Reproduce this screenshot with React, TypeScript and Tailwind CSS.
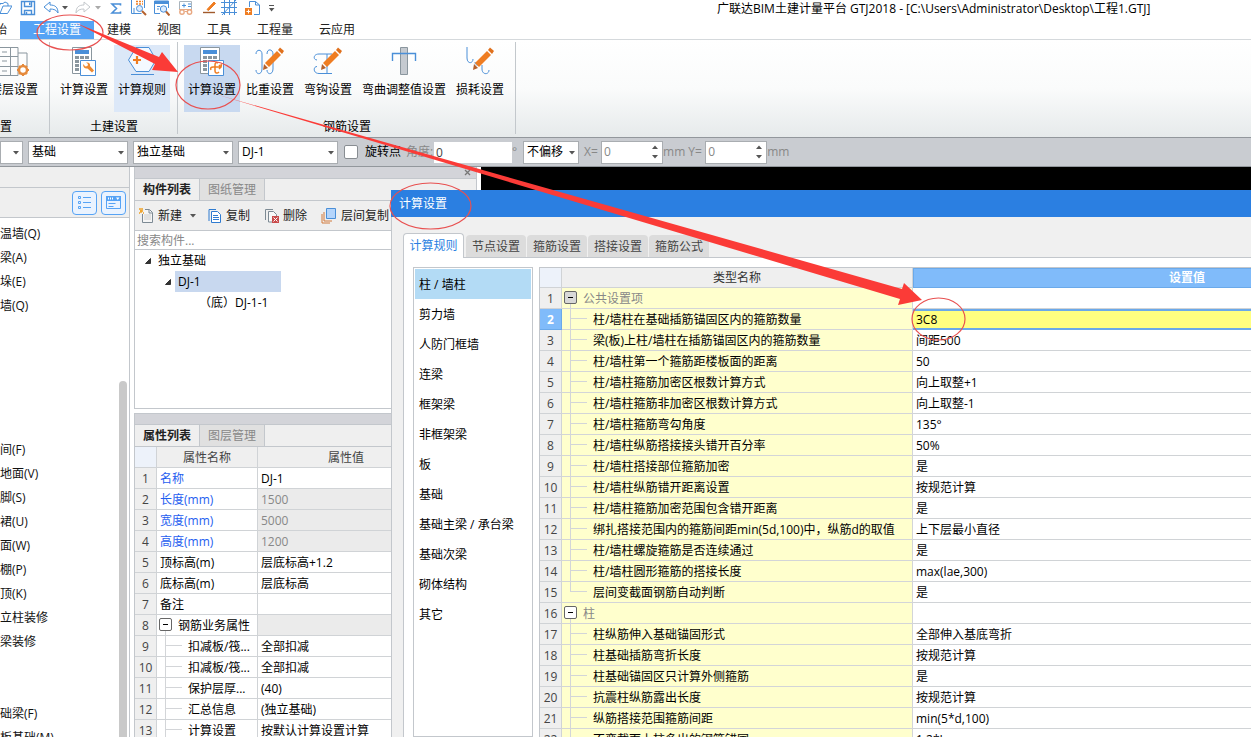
import type { ReactNode } from 'react';
import clsx from 'clsx';

const FONT = "font-['Open_Sans','Noto_Sans_CJK_SC',sans-serif]";

const menuTabs = ['工程设置', '建模', '视图', '工具', '工程量', '云应用'];

const moduleRows = [
  '温墙(Q)', '梁(A)', '垛(E)', '墙(Q)', '', '', '', '', '', '间(F)', '地面(V)', '脚(S)', '裙(U)', '面(W)', '棚(P)',
  '顶(K)', '立柱装修', '梁装修', '', '', '础梁(F)', '板基础(M)',
];

const categories = [
  '柱 / 墙柱', '剪力墙', '人防门框墙', '连梁', '框架梁', '非框架梁', '板', '基础', '基础主梁 / 承台梁', '基础次梁',
  '砌体结构', '其它',
];

interface Row {
  name: string;
  value: string;
  kind?: 'group' | 'child' | 'last';
  link?: boolean;
  locked?: boolean;
}

const properties: Row[] = [
  { name: '名称', value: 'DJ-1', link: true },
  { name: '长度(mm)', value: '1500', link: true, locked: true },
  { name: '宽度(mm)', value: '5000', link: true, locked: true },
  { name: '高度(mm)', value: '1200', link: true, locked: true },
  { name: '顶标高(m)', value: '层底标高+1.2' },
  { name: '底标高(m)', value: '层底标高' },
  { name: '备注', value: '' },
  { name: '钢筋业务属性', value: '', kind: 'group', locked: true },
  { name: '扣减板/筏...', value: '全部扣减', kind: 'child' },
  { name: '扣减板/筏...', value: '全部扣减', kind: 'child' },
  { name: '保护层厚...', value: '(40)', kind: 'child' },
  { name: '汇总信息', value: '(独立基础)', kind: 'child' },
  { name: '计算设置', value: '按默认计算设置计算', kind: 'child' },
];

const settings: Row[] = [
  { name: '公共设置项', value: '', kind: 'group' },
  { name: '柱/墙柱在基础插筋锚固区内的箍筋数量', value: '3C8', kind: 'child' },
  { name: '梁(板)上柱/墙柱在插筋锚固区内的箍筋数量', value: '间距500', kind: 'child' },
  { name: '柱/墙柱第一个箍筋距楼板面的距离', value: '50', kind: 'child' },
  { name: '柱/墙柱箍筋加密区根数计算方式', value: '向上取整+1', kind: 'child' },
  { name: '柱/墙柱箍筋非加密区根数计算方式', value: '向上取整-1', kind: 'child' },
  { name: '柱/墙柱箍筋弯勾角度', value: '135°', kind: 'child' },
  { name: '柱/墙柱纵筋搭接接头错开百分率', value: '50%', kind: 'child' },
  { name: '柱/墙柱搭接部位箍筋加密', value: '是', kind: 'child' },
  { name: '柱/墙柱纵筋错开距离设置', value: '按规范计算', kind: 'child' },
  { name: '柱/墙柱箍筋加密范围包含错开距离', value: '是', kind: 'child' },
  { name: '绑扎搭接范围内的箍筋间距min(5d,100)中，纵筋d的取值', value: '上下层最小直径', kind: 'child' },
  { name: '柱/墙柱螺旋箍筋是否连续通过', value: '是', kind: 'child' },
  { name: '柱/墙柱圆形箍筋的搭接长度', value: 'max(lae,300)', kind: 'child' },
  { name: '层间变截面钢筋自动判断', value: '是', kind: 'last' },
  { name: '柱', value: '', kind: 'group' },
  { name: '柱纵筋伸入基础锚固形式', value: '全部伸入基底弯折', kind: 'child' },
  { name: '柱基础插筋弯折长度', value: '按规范计算', kind: 'child' },
  { name: '柱基础锚固区只计算外侧箍筋', value: '是', kind: 'child' },
  { name: '抗震柱纵筋露出长度', value: '按规范计算', kind: 'child' },
  { name: '纵筋搭接范围箍筋间距', value: 'min(5*d,100)', kind: 'child' },
  { name: '不变截面上柱多出的钢筋锚固', value: '1.2*Lae', kind: 'child' },
];

function Caret({ className = 'text-[#555]' }: { className?: string }) {
  return (
    <svg width="6" height="4" viewBox="0 0 6 4" className={clsx('shrink-0', className)} aria-hidden="true">
      <path d="M0 0h6L3 3.5z" fill="currentColor" />
    </svg>
  );
}

/* ---------- quick access toolbar ---------- */

function QuickIcon({ label, className, children }: { label: string; className: string; children: ReactNode }) {
  return (
    <button type="button" aria-label={label} className={clsx('h-4 w-4 shrink-0', className)}>
      <svg width="16" height="16" viewBox="0 0 16 16" fill="none" stroke="#4a8fd8">
        {children}
      </svg>
    </button>
  );
}

function TitleBar() {
  return (
    <header className="flex h-[19px] shrink-0 items-start overflow-hidden bg-white">
      <div className="flex w-[717px] shrink-0 items-center">
        <QuickIcon label="打开" className="-ml-1">
          <path d="M4 13.500L7 6h9l-4.500 7.500zM4 5V3.500h3l2-1.500 3 1.500V6" />
        </QuickIcon>
        <QuickIcon label="保存" className="ml-2">
          <path d="M1.500 1.500h13v13h-13zM4.500 1.500v5h7v-5M4.500 14.500v-4h7v4M6.500 12v2" strokeWidth="1.400" />
          <path d="M9 2.500h1.500v2.500H9z" fill="#4a8fd8" stroke="none" />
        </QuickIcon>
        <QuickIcon label="撤销" className="ml-[7px]">
          <path d="M1 7l6-5v3c5 0 8 2 8 8-1.500-3-4-4-8-4v3z" />
        </QuickIcon>
        <Caret className="ml-[3px] text-[#555]" />
        <QuickIcon label="恢复" className="ml-[7px]">
          <path d="M15 7L9 2v3C4 5 1 7 1 13c1.500-3 4-4 8-4v3z" stroke="#c4c8cc" />
        </QuickIcon>
        <Caret className="ml-1 text-[#aaa]" />
        <QuickIcon label="汇总计算" className="ml-[7px]">
          <path d="M12.500 5.500V4H4l4.500 4.500L4 13h8.500v-1.500" strokeWidth="1.600" />
        </QuickIcon>
        <QuickIcon label="查看工程量" className="ml-[7px]">
          <path d="M.5 13.500h10M.5 0v13.500M3 8v6M13.500 0v8" />
          <path d="M5 1.500h2m1 0h2m1 0h1M5 4h2m1 0h2m1 0h1" stroke="#ef7d22" strokeWidth="1.500" />
          <circle cx="8.500" cy="8.500" r="3" fill="#dcecff" />
          <path d="M11 11l4 4" stroke="#b5602c" strokeWidth="2" />
        </QuickIcon>
        <QuickIcon label="查找" className="ml-[7px]">
          <path d="M.5 13.500V1h14v7M.5 13.500H6" />
          <path d="M0 1h15v3H0z" fill="#4a8fd8" stroke="none" />
          <path d="M3 6.500h3M3 9h2" />
          <circle cx="9.500" cy="9" r="3.200" fill="#dcecff" />
          <path d="M12 11.500l3.500 4" stroke="#b5602c" strokeWidth="2" />
        </QuickIcon>
        <QuickIcon label="查看计算式" className="ml-2">
          <path d="M1.500 9V1.500h12V9" stroke="#a9b4bd" />
          <path d="M4 5.500h4M6 3.500v4M10 4h3M10 6.500h3" />
          <circle cx="4" cy="12" r="2.200" stroke="#e8a882" strokeWidth="1.400" />
          <circle cx="11.500" cy="12" r="2.200" stroke="#e8a882" strokeWidth="1.400" />
          <path d="M1 9.500h13M7 11.500h2" stroke="#e8a882" />
        </QuickIcon>
        <QuickIcon label="编辑" className="ml-2">
          <path d="M5 9.500L12 2l1.500 1.500-7 7z" fill="#ef7d22" stroke="#ef7d22" />
          <path d="M1 12.500h12" stroke="#a05a2c" strokeWidth="1.400" />
        </QuickIcon>
        <QuickIcon label="轴网" className="ml-[3px]">
          <path d="M3.500 0v15M8.500 0v15M13.500 0v15M0 2.500h16M0 7.500h16M0 12.500h16M1 15L15 0" />
        </QuickIcon>
        <QuickIcon label="新建图纸" className="ml-2">
          <path d="M4.500 7V1.500h6l4 3.500v9.500H9M10.500 1.500V5h4" />
          <path d="M0 8h7v7H0z" fill="#ef7d22" stroke="none" />
          <path d="M3.500 9.500v4M1.500 11.500h4" stroke="#fff" />
        </QuickIcon>
        <svg width="7" height="8" viewBox="0 0 7 8" className="ml-[7px]" fill="#555">
          <path d="M1 1h5v1H1zM1 4h5.500L3.500 7.500z" />
        </svg>
      </div>
      <h1 className="whitespace-nowrap text-xs leading-[18px] text-black">
        广联达BIM土建计量平台 GTJ2018 - [C:\Users\Administrator\Desktop\工程1.GTJ]
      </h1>
    </header>
  );
}

function MenuTabs() {
  return (
    <nav className="flex h-[21px] shrink-0 border-b border-[#d5d9dc] bg-white text-xs leading-[22px]">
      <button type="button" className="flex w-5 justify-end overflow-hidden pr-[13px] text-[#222]">
        始
      </button>
      {menuTabs.map((tab, i) => (
        <button
          key={tab}
          type="button"
          className={clsx('flex whitespace-nowrap px-[13px]', i === 0 ? 'mt-0.5 bg-[#56a3f5] leading-[18px] text-white' : 'text-[#222]')}
        >
          {tab}
        </button>
      ))}
    </nav>
  );
}

/* ---------- ribbon ---------- */

function Pencil() {
  return (
    <g stroke="none">
      <path d="M10 17L22 5l4 4-12 12z" fill="#ef7d22" />
      <path d="M23 4l2-2.500 4 3.500-2 3z" fill="#e0701c" />
      <path d="M9 18l4 4-5 2z" fill="#b5602c" />
    </g>
  );
}

function Calculator() {
  return (
    <>
      <path d="M3.500 1.500h19v26h-19z" fill="#fff" stroke="#8a969e" />
      <path d="M6 4h14v4H6z" fill="#4a8fd8" stroke="none" />
      <path d="M6 10h4v3H6zm5 0h4v3h-4zm5 0h4v3h-4zM6 14h4v3H6zM6 18h4v3H6zM6 22h4v3H6z" fill="#8a969e" stroke="none" />
      <path d="M11.500 14.500h15v15h-15z" fill="#fff" />
    </>
  );
}

const ribbonIcons = {
  floor: (
    <>
      <path d="M0 1.500h19v28H0M0 10.500h19M0 20.500h19M11.500 1.500v28M19 7h9v14" stroke="#8a969e" />
      <path d="M3 6h5m-5 9h5m-5 10h5" stroke="#8a969e" />
      <circle cx="24" cy="24" r="4" stroke="#e58a3c" strokeWidth="2.500" fill="#fff" />
      <path d="M24 18v2m0 8v2m-6-6h2m8 0h2m-10-4l1 1m6 6l1 1m0-8l-1 1m-6 6l-1 1" stroke="#e58a3c" strokeWidth="2" />
    </>
  ),
  calc: (
    <>
      <Calculator />
      <path d="M14 18l2.500 2.500 2-.5.500-2-2-1.500c3-.5 4.500 1 4 3.500l4 4.500-2 2-4.500-4c-2.500.5-4.500-1-4.500-4.500z" fill="#ef8a30" stroke="none" />
    </>
  ),
  rule: (
    <>
      <path d="M1.500 14L9 1.500h13L29 14l-7 11.500H9z" fill="#f4f9ff" />
      <path d="M10 10v8M6 14h8" stroke="#ef7d22" strokeWidth="2.200" />
      <path d="M4 28.500h23" />
    </>
  ),
  rebar: (
    <>
      <Calculator />
      <path
        d="M14 24c-1-2 0-3 2-3h6c2 0 3-1 2-3M21 17c-2-1-3 0-3 2v6c0 2 2 3 4 1M22 23l2-2-2-2"
        stroke="#ef7d22"
        strokeWidth="1.500"
      />
    </>
  ),
  weight: (
    <>
      <path d="M1 8c0-5 6-5 6 0v15c0 6-6 6-6 1M12 8c0-6 6-5 6 0v15c0 6-6 6-6 1" />
      <Pencil />
    </>
  ),
  hook: (
    <>
      <path d="M19 8H6C0 8 0 14 4 14M14 8v19M19 27.500H6c-6 0-6-7-2-7" />
      <Pencil />
    </>
  ),
  bend: (
    <>
      <path d="M11.500 1.500h7v27h-7z" fill="#c5cad0" stroke="#8a969e" />
      <path d="M3.500 15V7.500h23V15" strokeWidth="1.400" />
    </>
  ),
  loss: (
    <>
      <path d="M2 1v11c0 6 6 6 6 1M10 16c0 4 5 4 5 0M17 19v4c0 6 7 6 7 1" />
      <Pencil />
    </>
  ),
};

interface RibbonItemProps {
  label: string;
  icon: keyof typeof ribbonIcons;
  className?: string;
}

function RibbonItem({ label, icon, className }: RibbonItemProps) {
  return (
    <button
      type="button"
      className={clsx('flex h-[67px] shrink-0 flex-col items-center whitespace-nowrap px-1 pt-px', className)}
    >
      <svg width="30" height="32" viewBox="0 0 30 32" fill="none" stroke="#4a8fd8" aria-hidden="true">
        {ribbonIcons[icon]}
      </svg>
      <span className="mt-0.5 leading-5">{label}</span>
    </button>
  );
}

function RibbonGroup({ title, children }: { title: string; children: ReactNode }) {
  return (
    <section className="flex shrink-0 flex-col justify-between border-r border-[#c3c8cc] pl-1.5 pr-[7px] pt-[3px]">
      <div className="flex gap-0.5">{children}</div>
      <p className="pl-0.5 text-center leading-[14px]">{title}</p>
    </section>
  );
}

function Ribbon() {
  return (
    <div className="flex h-[97px] shrink-0 overflow-hidden bg-gradient-to-b from-white via-[#fafbfb] to-[#e6eaeb] pb-[3px] pt-0.5 text-xs text-black">
      <section className="flex w-[50px] shrink-0 flex-col justify-between overflow-hidden border-r border-[#c3c8cc] pt-[3px]">
        <div className="flex justify-end pr-[7px]">
          <RibbonItem label="楼层设置" icon="floor" />
        </div>
        <p className="leading-[14px]">置</p>
      </section>
      <RibbonGroup title="土建设置">
        <RibbonItem label="计算设置" icon="calc" />
        <RibbonItem label="计算规则" icon="rule" className="bg-[#dce8f8]" />
      </RibbonGroup>
      <RibbonGroup title="钢筋设置">
        <RibbonItem label="计算设置" icon="rebar" className="bg-[#c8d9f0]" />
        <RibbonItem label="比重设置" icon="weight" />
        <RibbonItem label="弯钩设置" icon="hook" />
        <RibbonItem label="弯曲调整值设置" icon="bend" />
        <RibbonItem label="损耗设置" icon="loss" />
      </RibbonGroup>
    </div>
  );
}

/* ---------- options bar ---------- */

function Dropdown({ label, value, className }: { label: string; value: string; className: string }) {
  return (
    <div className={clsx('relative shrink-0', className)}>
      <select
        aria-label={label}
        defaultValue={value}
        className="h-[23px] w-full appearance-none border border-[#a9adb1] bg-white pl-[3px] leading-5 text-black outline-none"
      >
        <option>{value}</option>
      </select>
      <Caret className="pointer-events-none absolute right-1 top-2.5 text-[#555]" />
    </div>
  );
}

function Spin({ label, id }: { label: string; id: string }) {
  return (
    <div className="flex shrink-0 items-center text-[#888]">
      <label htmlFor={id} className="w-[17px]">{label}</label>
      <div className="flex h-[23px] w-[62px] items-center border border-[#a9adb1] bg-white pl-0.5 pr-1">
        <input id={id} defaultValue="0" className="w-full min-w-0 bg-transparent outline-none" />
        <svg width="6" height="14" viewBox="0 0 6 14" className="shrink-0" fill="#555">
          <path d="M0 4h6L3 .5zM0 10h6l-3 3.500z" />
        </svg>
      </div>
      <span>mm</span>
    </div>
  );
}

function OptionsBar() {
  return (
    <div className="flex h-[30px] shrink-0 items-center overflow-hidden border-y border-[#92979c] bg-[#c9ccd1] text-xs">
      <Dropdown label="楼层" value="" className="w-[23px]" />
      <Dropdown label="构件类别" value="基础" className="ml-[5px] w-[100px]" />
      <Dropdown label="构件类型" value="独立基础" className="ml-[5px] w-[100px]" />
      <Dropdown label="构件" value="DJ-1" className="ml-[5px] w-[100px]" />
      <label className="ml-1.5 flex shrink-0 items-center gap-[7px] text-black">
        <input type="checkbox" className="h-3.5 w-3.5 appearance-none rounded-[2px] border border-[#888d92] bg-white" />
        旋转点
      </label>
      <label htmlFor="angle" className="ml-[5px] w-7 shrink-0 text-[#888]">
        角度:
      </label>
      <input id="angle" defaultValue="0" className="h-[21px] w-[78px] shrink-0 bg-white pl-0.5 text-[#444] outline-none" />
      <span className="w-[11px] shrink-0 text-[#888]">°</span>
      <Dropdown label="偏移方式" value="不偏移" className="mr-[5px] w-14" />
      <div className="flex gap-[3px]">
        <Spin label="X=" id="offset-x" />
        <Spin label="Y=" id="offset-y" />
      </div>
    </div>
  );
}

/* ---------- left module list ---------- */

function ModulePanel() {
  return (
    <aside className="flex w-[130px] shrink-0 flex-col border-r border-[#c3c7cc] bg-white">
      <div className="h-[21px] shrink-0 border-b border-[#c3c7cc] bg-[#efefef]" />
      <div className="flex h-[30px] shrink-0 items-center justify-end gap-1 border-b border-[#c3c7cc] bg-[#efefef] pr-[3px]">
        <button type="button" aria-label="列表视图" className="h-6 w-[25px] rounded border border-[#56a3f5] bg-[#eaf3ff] pl-[5px]">
          <svg width="14" height="14" viewBox="0 0 14 14" fill="none" stroke="#56a3f5">
            <path d="M.5.5h2v2h-2zm0 5h2v2h-2zm0 5h2v2h-2zM5 1.500h8M5 6.500h8M5 11.500h8" />
          </svg>
        </button>
        <button type="button" aria-label="窗口视图" className="h-6 w-[25px] rounded border border-[#56a3f5] bg-[#eaf3ff] pl-1">
          <svg width="15" height="14" viewBox="0 0 15 14" fill="none" stroke="#56a3f5">
            <path d="M.5.5h14v12H.5zM2.500 7.500h7M2.500 10.500h5" />
            <path d="M0 0h15v5H0z" fill="#56a3f5" stroke="none" />
            <path d="M2.500 1.500v2m2-2v2m2-2v2" stroke="#fff" />
            <path d="M10 1.500h3.500L11.750 4z" fill="#fff" stroke="none" />
          </svg>
        </button>
      </div>
      <div className="flex min-h-0 flex-1 pt-1">
        <ul className="min-w-0 flex-1 overflow-hidden whitespace-nowrap leading-6 text-[#111]">
          {moduleRows.map((row, i) => (
            <li key={i} className="h-6">
              {row}
            </li>
          ))}
        </ul>
        <div className="mr-0.5 flex w-2 flex-col pt-[159px]">
          <div className="flex-1 rounded-t bg-[#c9c9c9]" />
        </div>
      </div>
    </aside>
  );
}

/* ---------- component and property panels ---------- */

function PanelTabs({ tabs }: { tabs: [string, string] }) {
  return (
    <div className="flex h-[22px] shrink-0 border-b border-[#c3c7cc] bg-[#efefef] leading-5">
      <button type="button" className="w-[65px] border-r border-[#c3c7cc] font-bold text-[#222]">{tabs[0]}</button>
      <button type="button" className="w-[65px] border-r border-[#c3c7cc] bg-[#e0e0e0] text-[#888]">{tabs[1]}</button>
    </div>
  );
}

function TreeArrow() {
  return (
    <svg width="6" height="6" viewBox="0 0 6 6" className="shrink-0" aria-hidden="true">
      <path d="M5.500.5v5h-5z" fill="#333" stroke="#333" />
    </svg>
  );
}

function ComponentPanel() {
  return (
    <section className="flex h-[242px] shrink-0 flex-col border border-t-0 border-[#c3c7cc] bg-white">
      <div className="flex h-3 shrink-0 items-center justify-end border-b border-[#c3c7cc] bg-[#d3d4d9] pr-[5px]">
        <button type="button" aria-label="关闭">
          <svg width="7" height="7" viewBox="0 0 7 7" stroke="#777" strokeWidth="1.300">
            <path d="M1 1l5 5M6 1L1 6" />
          </svg>
        </button>
      </div>
      <PanelTabs tabs={['构件列表', '图纸管理']} />
      <div className="flex h-[30px] shrink-0 items-center border-b border-[#c3c7cc] bg-[#efefef] pl-1 leading-5 text-[#222]">
        <button type="button" className="flex shrink-0 items-center gap-1">
          <svg width="15" height="16" viewBox="0 0 15 16" fill="none">
            <path d="M3.500 6v8.500h10v-10l-3-3H6M10 2v3h3" fill="#f5f5f5" stroke="#7d8a94" />
            <path d="M5 7h7M5 9h7M5 11h7" stroke="#ccc" />
            <path d="M0 1h1m2 0h1M1 3h3M0 5h1m3 0h1M2 0v5" stroke="#f0a020" strokeWidth="1.400" />
          </svg>
          新建
          <Caret className="ml-1 text-[#555]" />
        </button>
        <button type="button" className="ml-3 flex shrink-0 items-center gap-[5px]">
          <svg width="13" height="16" viewBox="0 0 13 16" fill="none" stroke="#2f7bd0">
            <path d="M1 13V1.500h7" />
            <path d="M3.500 3.500h6l3 3v8h-9z" fill="#fff" />
            <path d="M5 7.500h5M5 9.500h6M5 11.500h6" />
          </svg>
          复制
        </button>
        <button type="button" className="ml-[14px] flex shrink-0 items-center gap-1">
          <svg width="15" height="16" viewBox="0 0 15 16" fill="none">
            <path d="M1.500 12V1.500H9" stroke="#7d8a94" />
            <path d="M4.500 14V3.500h5l3 3V14z" fill="#f8f8f8" stroke="#7d8a94" />
            <path d="M8 8h7v7H8z" fill="#c94b4b" />
            <path d="M9.500 9.500l4 4m0-4l-4 4" stroke="#fff" />
          </svg>
          删除
        </button>
        <button type="button" className="ml-[14px] flex shrink-0 items-center gap-[5px]">
          <svg width="15" height="16" viewBox="0 0 15 16" fill="none">
            <path d="M1 6v9h8" stroke="#d27a3c" />
            <path d="M3 4v9h8" stroke="#d27a3c" />
            <path d="M5.500.5h9v10h-9z" fill="#b5d5fb" stroke="#4a8fd8" />
          </svg>
          层间复制
        </button>
      </div>
      <input
        aria-label="搜索构件"
        placeholder="搜索构件..."
        className="h-[19px] shrink-0 border-b border-[#c3c7cc] bg-white pl-0.5 leading-4 outline-none placeholder:text-[#888]"
      />
      <ul className="leading-[21px] text-black">
        <li className="flex h-[21px] items-center gap-[7px] pl-2.5">
          <TreeArrow />
          独立基础
        </li>
        <li className="flex h-[21px] items-center gap-1 pl-[30px]">
          <TreeArrow />
          <span className="w-[106px] bg-[#c8d8ef] pl-[3px]">DJ-1</span>
        </li>
        <li className="h-[21px] pl-16">（底）DJ-1-1</li>
      </ul>
    </section>
  );
}

function Branch({ last }: { last: boolean }) {
  return (
    <span className="ml-2 mr-1.5 flex w-[17px] shrink-0 flex-col">
      <span className="h-2.5 border-b border-l border-[#d3d5d8]" />
      <span className={clsx('flex-1', !last && 'border-l border-[#d3d5d8]')} />
    </span>
  );
}

function NameCell({ row, dark }: { row: Row; dark?: boolean }) {
  if (row.kind === 'group') {
    return (
      <div className="flex h-5 leading-[22px]">
        <span className="ml-0.5 mr-1.5 flex w-[13px] flex-col items-center pt-[3px]">
          <button
            type="button"
            aria-label="折叠"
            className={clsx('flex h-[13px] w-[13px] shrink-0 items-center justify-center rounded-[2px] border border-[#666]', dark ? 'bg-[#d8d8d8]' : 'bg-white')}
          >
            <span className="h-px w-[5px] bg-black" />
          </button>
          <span className="w-px flex-1 bg-[#d3d5d8]" />
        </span>
        {row.name}
      </div>
    );
  }
  return (
    <div className="flex h-5 leading-[22px]">
      {row.kind && <Branch last={row.kind === 'last'} />}
      <span className={row.kind ? '' : 'pl-[3px]'}>{row.name}</span>
    </div>
  );
}

function PropertyPanel() {
  return (
    <section className="flex min-h-0 flex-1 flex-col overflow-hidden border border-b-0 border-[#c3c7cc] bg-white">
      <div className="h-[11px] shrink-0 border-b border-[#c3c7cc] bg-[#d3d4d9]" />
      <PanelTabs tabs={['属性列表', '图层管理']} />
      <table className="w-[300px] table-fixed border-separate border-spacing-0 whitespace-nowrap text-left">
        <thead>
          <tr className="leading-[18px] text-[#444]">
            <th className="h-[21px] w-[22px] border-b border-r border-[#d0d3d6] bg-[#edf2fa] p-0" />
            <th className="w-[101px] border-b border-r border-[#d0d3d6] bg-[#efefef] p-0 text-center align-bottom font-normal">属性名称</th>
            <th className="border-b border-r border-[#d0d3d6] bg-[#efefef] p-0 text-center align-bottom font-normal">属性值</th>
          </tr>
        </thead>
        <tbody className="leading-[18px]">
          {properties.map((row, i) => (
            <tr key={i}>
              <td className="h-[21px] border-b border-r border-[#d0d3d6] bg-[#efefef] p-0 text-center align-bottom text-[#444]">{i + 1}</td>
              <td className={clsx('border-b border-r border-[#d0d3d6] p-0', row.link ? 'text-[#1f5ef0]' : 'text-black')}>
                <NameCell row={row} />
              </td>
              <td
                className={clsx(
                  'border-b border-r border-[#d0d3d6] p-0 pl-[3px] align-bottom',
                  row.locked ? 'bg-[#ebebeb] text-[#888]' : 'text-black',
                )}
              >
                {row.value}
              </td>
            </tr>
          ))}
        </tbody>
      </table>
    </section>
  );
}

/* ---------- calculation settings dialog ---------- */

function SettingsTable() {
  return (
    <table className="w-full table-fixed border-separate border-spacing-0 whitespace-nowrap border-l border-t border-[#c3c7cc] text-left">
      <thead>
        <tr className="leading-[18px]">
          <th className="h-5 w-[22px] border-b border-r border-[#d0d3d6] bg-[#edf2fa] p-0" />
          <th className="w-[351px] border-b border-r border-[#d0d3d6] bg-[#efefef] p-0 text-center align-bottom font-normal text-[#333]">
            类型名称
          </th>
          <th className="border border-[#6aa9ea] bg-[#80bbfa] p-0 text-center align-bottom font-bold text-white">设置值</th>
        </tr>
      </thead>
      <tbody className="leading-[18px]">
        {settings.map((row, i) => {
          const active = i === 1;
          return (
            <tr key={i}>
              <td
                className={clsx(
                  'h-[21px] border-b border-r p-0 text-center align-bottom',
                  active ? 'border-[#6aa9ea] bg-[#80bbfa] font-bold text-white' : 'border-[#d0d3d6] bg-[#efefef] text-[#444]',
                )}
              >
                {i + 1}
              </td>
              <td
                className={clsx(
                  'border-b border-r border-[#d3d5d8] bg-[#ffffcd] p-0',
                  row.kind === 'group' ? 'text-[#888]' : 'text-black',
                )}
              >
                <NameCell row={row} dark={i === 0} />
              </td>
              <td
                className={clsx(
                  'p-0 pl-[3px] text-black',
                  active
                    ? 'border-y-2 border-[#6aa9ea] bg-[#ffff80] leading-[17px]'
                    : 'border-b border-[#d0d3d6] bg-white align-bottom',
                )}
              >
                {row.value}
              </td>
            </tr>
          );
        })}
      </tbody>
    </table>
  );
}

function SettingsDialog() {
  return (
    <div
      role="dialog"
      aria-label="计算设置"
      className="absolute -right-[220px] bottom-0 left-[391px] top-[23px] flex flex-col overflow-hidden bg-[#f0f0f0]"
    >
      <div className="h-[27px] shrink-0 bg-[#2b7fe1] pl-2 leading-[27px] text-white">计算设置</div>
      <div className="flex min-h-0 flex-1 flex-col border-l border-[#c3c7cc] pl-[11px] pr-[10px] pt-4">
        <div className="flex h-6 shrink-0 items-end gap-px text-[#444]">
          <button type="button" className="z-10 -mb-px mr-px h-[25px] w-[61px] self-start rounded-t-sm border border-b-0 border-[#c3c7cc] bg-white text-[#2b7fe1]">
            计算规则
          </button>
          {['节点设置', '箍筋设置', '搭接设置', '箍筋公式'].map((tab) => (
            <button key={tab} type="button" className="h-[22px] w-[60px] rounded-t-sm bg-[#dcdcdc] pt-0.5">
              {tab}
            </button>
          ))}
        </div>
        <div className="flex min-h-0 flex-1 gap-1.5 border-l border-t border-[#c3c7cc] bg-white pl-[9px] pt-[9px]">
          <ul className="w-[120px] shrink-0 border border-[#c3c7cc] px-px pt-px leading-8 text-black">
            {categories.map((name, i) => (
              <li key={name} className={clsx('h-[30px] whitespace-nowrap pl-1', i === 0 && 'bg-[#b3dbf5]')}>
                {name}
              </li>
            ))}
          </ul>
          <div className="min-w-0 flex-1">
            <SettingsTable />
          </div>
        </div>
      </div>
    </div>
  );
}

/* Red pen marks that walk through the steps */
function Markup() {
  return (
    <svg className="pointer-events-none absolute left-0 top-0 z-20" width="1000" height="400" viewBox="0 0 1000 400" aria-hidden="true">
      <g fill="none" stroke="#e85050" strokeWidth="1.200">
        <ellipse cx="70" cy="32.500" rx="33" ry="17.500" />
        <ellipse cx="208" cy="85" rx="32" ry="24" />
        <ellipse cx="430.500" cy="206" rx="40.500" ry="23" />
        <ellipse cx="938.500" cy="319" rx="26.500" ry="21" />
      </g>
      <g fill="#fb3b37">
        <path d="M76 23l83 34 3-5 16 20-26-2 3-6z" />
        <path d="M215 94L902 289l2-6 18 17-24 5 2-6z" />
      </g>
    </svg>
  );
}

export default function App() {
  return (
    <div className={clsx('relative flex h-screen flex-col overflow-hidden bg-white text-xs', FONT)}>
      <TitleBar />
      <MenuTabs />
      <Ribbon />
      <OptionsBar />
      <main className="relative flex min-h-0 flex-1 overflow-hidden">
        <ModulePanel />
        <div className="ml-1 flex w-[343px] shrink-0 flex-col gap-1">
          <ComponentPanel />
          <PropertyPanel />
        </div>
        <div className="ml-1 flex-1 bg-black" />
        <SettingsDialog />
      </main>
      <Markup />
    </div>
  );
}
